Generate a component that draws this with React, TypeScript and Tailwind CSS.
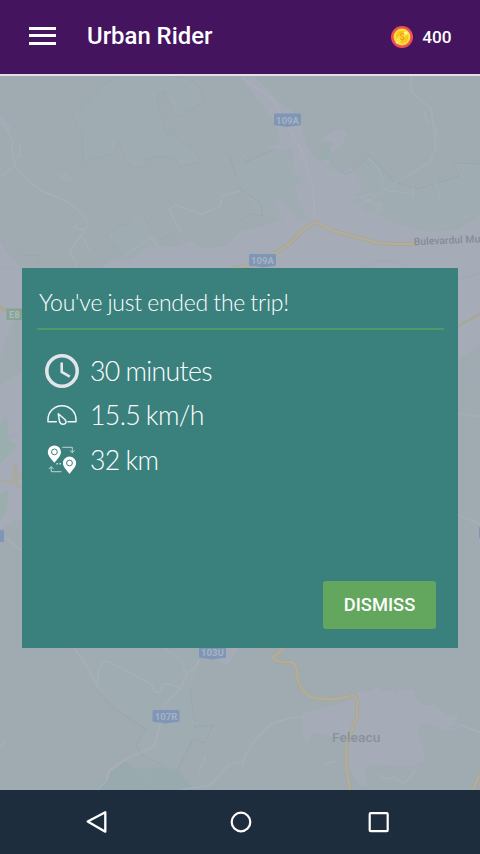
import type { ReactNode } from "react";

type ShieldProps = { x: number; y: number; label: string };

function Shield({ x, y, label }: ShieldProps) {
  return (
    <g transform={`translate(${x} ${y})`}>
      <path d="M1.5 0H25.5Q27 0 27 1.5V10.5Q27 12 25 12Q20 12 13.5 13.5Q7 12 2 12Q0 12 0 10.5V1.5Q0 0 1.5 0Z" fill="#8096b6" />
      <text x="13.5" y="10" textAnchor="middle" fontSize="9.6" fontWeight="700" fill="#a6b2c3">{label}</text>
    </g>
  );
}

function MapView() {
  return (
    <svg className="absolute inset-0 size-full" viewBox="0 76 480 714" preserveAspectRatio="none" fontFamily="Roboto, 'Liberation Sans', sans-serif" fill="none" strokeLinejoin="round" strokeLinecap="round">
      <rect x="0" y="76" width="480" height="714" fill="#a0abb1" />
      {/* forests and fields */}
      <g fill="#9facb2" stroke="#9fa7ae" strokeWidth="1">
        <path d="M118 76L103 85L72 116L82 134L83 160L89 163L90 159L113 154L119 142L124 155L131 167H151L144 160Q163 152 177 161L179 167L199 162V156L188 145L173 136L165 134L163 121L157 98Q160 91 164 91L171 107L177 117L204 102L200 88Q194 79 174 76Z" />
        <path d="M106 236L120 226L131 222V214H143L153 233L166 244L135 262L122 253Z" />
        <path d="M240 145L246 162L282 147L302 170L312 220L308 227L262 216L240 188Z" stroke="none" />
        <path d="M320 150L348 174L369 156L392 181L416 188L456 176L453 163H480V214L442 230H418L370 216L335 206L314 208Z" stroke="none" />
      </g>
      <path d="M72 648L97 690L128 717L146 729L136 745L143 755L160 764L176 770L196 736L213 744L220 729L195 727L190 690L200 665L225 650Z" fill="#9facb2" />
      {/* built-up areas */}
      <g fill="#a5abb7">
        <path d="M240 76H253L268 89L281 104L298 115L307 145L315 158L330 169L342 175L351 166L363 186L350 202L371 213L402 225L430 232L460 229L480 215V268H100L111 260L132 258L150 246L177 247L190 240L202 249L225 246L240 232L262 226L282 220L274 200L281 199L298 218L308 220L294 188L304 181L294 172L292 149L266 149L281 141L274 121L258 100Z" />
        <path d="M0 240L7 253L21 268H0Z" />
        <path d="M326 136L332 132L341 129L348 132L340 149L331 152L329 166L319 171L325 155L334 143L322 140Z" />
        <path d="M302 713L330 707L355 697L357 692L370 691L378 687L384 692L393 690L399 693L397 687L408 691L414 689L415 698L422 706L435 704L445 714L458 716L457 724L445 729L424 722L417 729L424 752V761L413 766H395L370 764L365 772L367 786L360 785L350 770L346 745L336 738L313 732L308 742L303 738Z" />
        <path d="M0 269H22V317L12 322L0 358Z M0 386L22 371V520L0 529Z" />
        <path d="M458 268H480V344L458 361Z" />
        <path d="M215 648H239L227 666L218 660Z M0 116L11 127L8 132L0 124Z" />
      </g>
      <rect x="375" y="202" width="7" height="11" fill="#a5abb7" />
      {/* green patches */}
      <path d="M95 790L113 770L126 761L135 769L146 768L154 768L178 769L194 790Z" fill="#98aaad" />
      <path d="M148 770L160 766L171 770L164 788L151 785Z" stroke="#a0aaa8" />
      <path d="M317 159L329 145L331 150L328 160Z" fill="#9aadae" />
      <path d="M0 422L7 417L8 440L17 445L0 463V450Z M0 494L9 489L5 514L0 520Z M13 522L17 518L14 527Z" fill="#99aead" />
      {/* municipal limits */}
      <g stroke="#9ba5ac" strokeWidth="1">
        <path d="M240 155L246 162L272 150M331 162L345 174L350 173L369 156L395 182L418 189L459 176L453 163L480 164M240 222L249 214L263 216L260 202L240 189" />
        <path d="M230 157L236 176M170 232L160 244M97 690L113 708L146 729L136 745L142 755L161 764M190 690L195 727L213 725L205 743L193 739L178 769M22 255L38 256V268" />
      </g>
      {/* minor roads */}
      <g stroke="#a5afb7" strokeWidth="1.4">
        <path d="M0 177L15 166Q31 184 40 190L66 201Q80 209 89 224L70 251L78 268M15 166L12 150L13 140L6 128M20 145V157H13M59 175L71 182M64 174L72 179M84 230L74 228L78 223M83 237L89 250" />
        <path d="M240 191L222 196L220 207L201 214L175 205L169 210L181 232M122 257L151 238L159 248M348 213L384 190L430 162L436 149L431 108L411 92V76M424 112L428 124M435 126L438 139M363 198L379 206M369 158L380 170L383 184M384 190L412 194M413 188L414 200M435 181L440 202M322 205L372 194M337 236L352 268M398 261V268M0 533L22 551" />
        <path d="M242 765Q247 745 270 725Q285 718 302 717M325 764L337 761M378 774Q385 782 393 777L403 783Q412 777 415 770M440 729L456 729L460 725L480 732M165 648L180 660L187 675M190 720L198 725M206 756L198 773M180 790L211 785L228 765L240 762M0 747L5 740" />
        <path d="M458 413L480 417M458 300L470 315L460 341M458 515L480 524M458 337L470 322L480 326" />
      </g>
      <g stroke="#a9aeb9" strokeWidth="2.2">
        <path d="M242 78L272 98L289 128L305 158L313 190L315 222" />
        <path d="M97 686L98 674Q101 659 109 662L151 684L155 692L160 692L163 684L171 684L180 688M199 660L194 669L188 672L181 688L165 704L160 725L154 747L144 751L126 759L109 771L107 780L97 790" strokeWidth="1.7" />
        <path d="M74 648L85 663L97 686" strokeWidth="1.4" />
      </g>
      {/* waterways */}
      <g stroke="#9babba" strokeWidth="1.2">
        <path d="M362 268Q380 255 405 266M292 726L287 738L283 752L270 770L265 790M232 763L229 790M0 444Q10 434 22 431M458 280L480 273M458 390L480 369" />
      </g>
      {/* trunk roads */}
      <g stroke="#a9a895" strokeWidth="4">
        <path d="M236 268L250 265L277 252L289 244L303 230L315 222L334 231L378 243L398 244H413M283 648Q278 655 273 657Q275 663 291 662Q298 664 297 675Q298 688 310 697Q330 702 346 697Q360 692 357 707V717L347 743L346 764L350 790M480 774L473 790M0 308L22 315" />
        <path d="M458 326L480 314" strokeWidth="2.5" />
      </g>
      <g stroke="#b1ae9f" strokeWidth="2">
        <path d="M236 268L250 265L277 252L289 244L303 230L315 222L334 231L378 243L398 244H413M283 648Q278 655 273 657Q275 663 291 662Q298 664 297 675Q298 688 310 697Q330 702 346 697Q360 692 357 707V717L347 743L346 764L350 790M480 774L473 790" />
      </g>
      <path d="M0 480L12 482L22 473M15 466L12 482L22 488M16 465L17 488" stroke="#ada89e" strokeWidth="2" />
      <Shield x={274} y={113.5} label="109A" />
      <Shield x={249} y={254} label="109A" />
      <Shield x={199} y={646} label="103U" />
      <Shield x={152.5} y={710} label="107R" />
      <rect x="-20" y="530" width="24" height="12" rx="1.5" fill="#8096b6" />
      <rect x="479" y="527" width="5" height="11" fill="#8096b6" />
      <rect x="6.5" y="308.5" width="24" height="11.5" fill="#86a396" />
      <text x="9" y="318" fontSize="9.5" fontWeight="700" fill="#adb9b7">E8</text>
      <text x="414" y="245.3" fontSize="10.3" letterSpacing="0.05" fontWeight="500" fill="#858c94" transform="rotate(-2.6 414 246)">Bulevardul Mu</text>
      <text x="332" y="742" fontSize="13.6" letterSpacing="0.15" fontWeight="500" fill="#89919f">Feleacu</text>
    </svg>
  );
}

function CoinIcon() {
  return (
    <svg className="size-[22px]" viewBox="0 0 22 22">
      <circle cx="11" cy="11" r="11" fill="#ee5058" />
      <circle cx="11" cy="11" r="8.4" fill="#ffdf32" />
      <circle cx="11" cy="11" r="6.2" fill="#fcc51c" />
      <path d="M5 13L14 5L17 8L8 17Z" fill="#ffe24a" />
      <text x="11" y="14.3" textAnchor="middle" fontSize="9" fontWeight="700" fill="#ed9a12" fontFamily="Roboto, sans-serif">$</text>
      <path d="M15 4.5L15.6 6.3L17.5 7L15.6 7.7L15 9.5L14.4 7.7L12.5 7L14.4 6.3ZM6 14.7L6.5 16L7.7 16.5L6.5 17L6 18.2L5.5 17L4.4 16.5L5.5 16Z" fill="#fff5c5" />
    </svg>
  );
}

function ClockIcon() {
  return (
    <svg className="size-[34px]" viewBox="0 0 34 34" fill="none" stroke="#e3e5eb">
      <circle cx="17" cy="17" r="15.2" strokeWidth="3.5" />
      <path d="M16.7 8.4V17.9L24.8 22.7" strokeWidth="2.6" />
    </svg>
  );
}

function SpeedIcon() {
  return (
    <svg className="size-[34px]" viewBox="0 0 34 34" fill="none" stroke="#f2f7f6" strokeWidth="1.5" strokeLinejoin="round" strokeLinecap="round">
      <path d="M11.3 23.8H3V21.8C3 13.9 9.2 7.8 17 7.8S31 13.9 31 21.8V23.8H23" />
      <path d="M13.3 15.8L19.7 21.2C22.2 23.8 21 26.3 18.2 26.3C15.7 26.4 14.8 24.9 14.4 22.9Z" />
    </svg>
  );
}

function RouteIcon() {
  return (
    <svg className="size-[34px]" viewBox="0 0 34 34">
      <path fill="#fff" d="M9.4 2.4A6.6 6.6 0 0 1 16 9C16 13 12.2 16.2 9.4 19.8C6.6 16.2 2.8 13 2.8 9A6.6 6.6 0 0 1 9.4 2.4ZM24.5 13.5A6.6 6.6 0 0 1 31.1 20.1C31.1 24.1 27.3 27.3 24.5 30.9C21.7 27.3 17.9 24.1 17.9 20.1A6.6 6.6 0 0 1 24.5 13.5Z" />
      <g fill="none" stroke="#3a817e" strokeWidth="1">
        <circle cx="9.4" cy="8.9" r="2.9" />
        <circle cx="24.5" cy="20" r="2.9" />
      </g>
      <path d="M17.3 4.3H27.3V9.3M25 7.5L27.3 9.7L29.6 7.5M16.5 28.7H6.2V23.8M3.9 26L6.2 23.6L8.5 26" fill="none" stroke="#c7dedb" strokeWidth="0.9" />
      <path d="M11.4 20.7H13M14.4 20.7H16" stroke="#c7dedb" strokeWidth="1.4" />
    </svg>
  );
}

function Stat({ icon, children }: { icon: ReactNode; children: ReactNode }) {
  return (
    <li className="flex h-[44.5px] items-center gap-[11px]">
      {icon}
      <span className="pt-px text-[26.7px] leading-none font-light tracking-[-0.65px] [word-spacing:-0.8px]">{children}</span>
    </li>
  );
}

export default function App() {
  return (
    <div className="flex h-[854px] w-[480px] flex-col overflow-hidden font-['Roboto','Liberation_Sans',sans-serif] text-white">
      <header className="flex h-[76px] shrink-0 items-center border-b-2 border-[#e3dfe6] bg-[#45145f] pr-[28.5px] pl-[29px]">
        <button aria-label="Menu" className="mt-[-3px] flex w-[27px] flex-col gap-[4.5px]">
          <span className="h-[3px] w-full bg-white" />
          <span className="h-[3px] w-full bg-white" />
          <span className="h-[3px] w-full bg-white" />
        </button>
        <h1 className="mt-[-3px] ml-[31px] text-[23.9px] leading-7 font-medium">Urban Rider</h1>
        <div className="ml-auto flex items-center gap-[9px]">
          <CoinIcon />
          <span className="text-[17.2px] leading-5 font-medium">400</span>
        </div>
      </header>

      <main className="relative h-[714px] shrink-0 px-[22px] pt-[192px]">
        <MapView />
        <section className="relative flex h-[380px] flex-col bg-[#3a817e] pr-[14px] pl-[15px] font-['Lato','Liberation_Sans',sans-serif]">
          <h2 className="flex h-[62px] items-end border-b-2 border-[#4e9969] pb-3 pl-[2px] text-[23px] leading-7 font-light tracking-[-0.22px] [word-spacing:-0.8px]">You've just ended the trip!</h2>
          <ul className="mt-[18.5px] pl-2">
            <Stat icon={<ClockIcon />}>30 minutes</Stat>
            <Stat icon={<SpeedIcon />}>15.5 km/h</Stat>
            <Stat icon={<RouteIcon />}>32 km</Stat>
          </ul>
          <button className="mt-auto mr-2 mb-[19px] h-12 w-[113px] self-end rounded-[3px] bg-[#62a75d] pb-px font-['Roboto','Liberation_Sans',sans-serif] text-[18.3px] font-medium">DISMISS</button>
        </section>
      </main>

      <nav className="flex h-16 shrink-0 items-center justify-between bg-[#1e2d3d] pr-[90px] pl-[86px]">
        <svg className="size-[22px]" viewBox="0 0 22 22" fill="none" stroke="#fff" strokeWidth="2.3" strokeLinejoin="round">
          <path d="M19.3 1.3V20.7L1.7 10.5Z" />
        </svg>
        <svg className="ml-[6px] size-[22px]" viewBox="0 0 22 22" fill="none" stroke="#fff" strokeWidth="2.2">
          <circle cx="11" cy="11" r="9.3" />
        </svg>
        <svg className="size-[22px]" viewBox="0 0 22 22" fill="none" stroke="#fff" strokeWidth="2.2" strokeLinejoin="round">
          <rect x="1.7" y="2.2" width="18" height="18" rx="1" />
        </svg>
      </nav>
    </div>
  );
}
